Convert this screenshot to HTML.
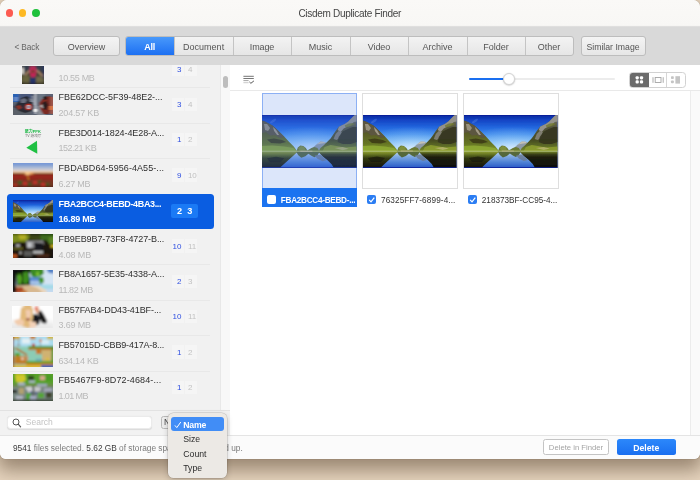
<!DOCTYPE html>
<html><head><meta charset="utf-8"><title>Cisdem Duplicate Finder</title>
<style>
*{box-sizing:border-box;margin:0;padding:0}
html,body{width:700px;height:480px;overflow:hidden}
body{font-family:"Liberation Sans","Noto Sans CJK SC",sans-serif;background:#d9c8b3;position:relative;color:#333}
.abs{position:absolute}
#desk{position:absolute;left:0;top:0;width:700px;height:480px;background:#e6d4be}
#win{position:absolute;left:0;top:0;width:700px;height:458.6px;border-radius:7px 7px 6px 6px;overflow:hidden;background:#fff;box-shadow:0 0 1px rgba(60,40,20,.5),0 9px 18px 2px rgba(80,60,40,.5)}
#title{position:absolute;left:0;top:0;width:700px;height:27px;z-index:2;background:linear-gradient(#faf9f7 0,#f8f7f5 25.4px,#e6e5e4 26.2px,#d9d9d9 26.8px)}
#title .t{position:absolute;left:298.4px;top:7.5px;font-size:10px;line-height:12px;letter-spacing:-.3px;color:#444;white-space:nowrap}
.tl{position:absolute;top:9.2px;width:7.8px;height:7.8px;border-radius:50%}
#tool{position:absolute;left:0;top:26px;width:700px;height:39.5px;background:#d9d9d9}
.btn{position:absolute;top:10.4px;height:19.6px;border:1px solid #bdbdbd;border-radius:3px;background:linear-gradient(#f4f4f4,#e6e6e6);font-size:9px;color:#555;text-align:center;line-height:20.6px}
#tabs{position:absolute;left:125.2px;top:10.1px;height:19.9px;width:448.6px;border:1px solid #bdbdbd;border-radius:3px;background:linear-gradient(#f3f3f3,#e6e6e6);overflow:hidden}
#tabs div{position:absolute;top:0;height:17.9px;line-height:21.2px;padding-right:1.4px;font-size:9px;color:#555;text-align:center;border-left:1px solid #c4c4c4}
#left{position:absolute;left:0;top:65px;width:220px;height:345.4px;background:#f1f1f1;overflow:hidden}
#lsb{position:absolute;left:220px;top:65px;width:10px;height:345.4px;background:#f8f8f8;border-left:1px solid #e8e8e8}
#right{position:absolute;left:229.8px;top:65px;width:470.2px;height:370px;background:#fff;overflow:hidden}
.row{position:absolute;left:0;width:220.5px;height:35.4px}
.row .sep{position:absolute;left:10px;width:200px;top:0;height:1px;background:#e8e8e8}
.row .nm{position:absolute;left:58.5px;top:3.8px;font-size:9px;color:#2e2e2e;white-space:nowrap;line-height:12px}
.row .sz{position:absolute;left:58.5px;top:19.6px;font-size:9px;color:#b9b9b9;white-space:nowrap;line-height:12px}
.row .c1b,.row .c2b{position:absolute;top:10.2px;height:13.5px;width:12.3px;background:#f5f5f5}
.row .c1b{left:172.1px}.row .c2b{left:185px}
.row .cb{position:absolute;left:171.3px;top:10.3px;width:27px;height:14px;border-radius:2px;background:#1b7af5}
.row .c1,.row .c2{position:absolute;top:10.6px;height:13px;width:20px;font-size:8px;line-height:13px;text-align:center}
.row .c1{left:161.4px;text-align:right;color:#2f4fe0}
.row .c2{left:187.9px;text-align:left;color:#c2c2c2}
.row.sel .selbg{position:absolute;left:7px;top:6.3px;width:206.6px;height:35px;top:0.9px;border-radius:3.5px;background:#0a5de1}
.row.sel .nm,.row.sel .sz,.row.sel .c1,.row.sel .c2{color:#fff;font-weight:bold}
.row.sel .nm{letter-spacing:-.35px;top:4.1px}
.row.sel .sz{letter-spacing:-.2px;top:19.9px}
.row.sel .c1,.row.sel .c2{font-size:9.2px;top:11.2px}
.row.sel .c1{left:162px}.row.sel .c2{left:187.2px}
.th{position:absolute;overflow:hidden}
#srow{position:absolute;left:0;top:410.4px;width:230px;height:25px;background:#f2f2f2;border-top:1px solid #e2e2e2}
#search{position:absolute;left:7.4px;top:4.4px;width:144.6px;height:13.4px;border-radius:3.5px;background:#fff;border:.5px solid #ebebeb;box-shadow:0 .5px 1px rgba(0,0,0,.1)}
#bot{position:absolute;left:0;top:435px;width:700px;height:25px;background:#fbfbfb;border-top:1px solid #e4e4e4}
#menu{position:absolute;left:168px;top:413px;width:59px;height:65px;border-radius:5.5px;background:#ece9e5;box-shadow:0 0 0 .5px rgba(60,50,40,.22),0 2px 6px rgba(0,0,0,.18)}
#menu .it{position:absolute;left:15.3px;font-size:8.7px;color:#2b2b2b;line-height:12px}
.card{position:absolute;top:28.4px;width:95.8px;height:95.2px;border:1px solid #dedede;background:#fff}
.lbl{position:absolute;font-size:8.2px;color:#333;white-space:nowrap;line-height:12px;top:129.5px}
.ck{position:absolute;top:129.8px;width:9px;height:9.5px;border-radius:2px;background:#2b7df3}
</style></head><body>
<svg width="0" height="0" style="position:absolute">
 <defs>
  <linearGradient id="sky" x1="0" y1="0" x2="0" y2="1">
   <stop offset="0" stop-color="#0c2ca4"/><stop offset=".12" stop-color="#1444c4"/><stop offset=".32" stop-color="#2266de"/><stop offset=".52" stop-color="#3a88ec"/><stop offset=".72" stop-color="#74b6f4"/><stop offset=".88" stop-color="#a8d4fa"/><stop offset="1" stop-color="#bcdffc"/>
  </linearGradient>
  <radialGradient id="skyr" cx=".52" cy=".9" r=".6"><stop offset="0" stop-color="#d8ecff" stop-opacity=".85"/><stop offset=".5" stop-color="#a8d4fa" stop-opacity=".4"/><stop offset="1" stop-color="#a8d4fa" stop-opacity="0"/></radialGradient>
  <linearGradient id="wat" x1="0" y1="0" x2="0" y2="1">
   <stop offset="0" stop-color="#c8dcf0"/><stop offset=".3" stop-color="#86aee4"/><stop offset=".7" stop-color="#4c80d4"/><stop offset="1" stop-color="#2c5cc8"/>
  </linearGradient>
  <linearGradient id="ml" x1="0" y1="0" x2="0" y2="1">
   <stop offset="0" stop-color="#4e4a34"/><stop offset=".45" stop-color="#5a5e26"/><stop offset=".75" stop-color="#667624"/><stop offset="1" stop-color="#86a030"/>
  </linearGradient>
  <linearGradient id="mr" x1="0" y1="0" x2="0" y2="1">
   <stop offset="0" stop-color="#7c7c70"/><stop offset=".35" stop-color="#54543c"/><stop offset=".7" stop-color="#484e22"/><stop offset="1" stop-color="#748a2a"/>
  </linearGradient>
  <linearGradient id="rl" x1="0" y1="0" x2="0" y2="1">
   <stop offset="0" stop-color="#8a9a30"/><stop offset=".2" stop-color="#5e6c20"/><stop offset=".4" stop-color="#343a12"/><stop offset="1" stop-color="#14140a"/>
  </linearGradient>
  <linearGradient id="rr" x1="0" y1="0" x2="0" y2="1">
   <stop offset="0" stop-color="#6e7e28"/><stop offset=".15" stop-color="#3c4218"/><stop offset=".35" stop-color="#1c1e0e"/><stop offset="1" stop-color="#0e0e08"/>
  </linearGradient>
  <filter id="bs" x="0" y="0" width="100%" height="100%"><feGaussianBlur stdDeviation=".8"/><feComponentTransfer><feFuncA type="linear" slope="3"/></feComponentTransfer></filter>
  <linearGradient id="g_sun" x1="0" y1="0" x2="0" y2="1"><stop offset="0" stop-color="#6c92d8"/><stop offset=".12" stop-color="#90a8d4"/><stop offset=".24" stop-color="#c0c8d8"/><stop offset=".34" stop-color="#e6d0c0"/><stop offset=".41" stop-color="#f0a85c"/><stop offset=".44" stop-color="#a84020"/><stop offset=".48" stop-color="#9c261c"/><stop offset=".7" stop-color="#8c261c"/><stop offset="1" stop-color="#70281c"/></linearGradient>
  <linearGradient id="g_fl" x1="0" y1="0" x2="0" y2="1"><stop offset="0" stop-color="#fafafa"/><stop offset="1" stop-color="#e4e4e4"/></linearGradient>
  <filter id="bl" x="-5%" y="-5%" width="110%" height="110%"><feGaussianBlur stdDeviation=".45"/></filter>
  <symbol id="lake" viewBox="0 0 94 53" preserveAspectRatio="none">
   <rect width="94" height="53" fill="#0a1c98"/>
   <g filter="url(#bl)">
   <rect x="0" y=".8" width="94" height="36" fill="url(#sky)"/>
   <rect x="0" y=".8" width="94" height="36" fill="url(#skyr)"/>
   <rect x="0" y="36" width="94" height="16.4" fill="url(#wat)"/>
   <ellipse cx="11" cy="6" rx="3.5" ry="1.3" fill="#6a98e8" opacity=".3" transform="rotate(-35 11 6)"/>
   <!-- distant mountain -->
   <polygon points="50,33 54,29.5 58,26.5 62,26.8 65,28.5 70,36 50,36" fill="#8e9aa4"/>
   <polygon points="54,29.5 58,26.5 62,26.8 63,28 58,28.6" fill="#c4c0b4"/>
   <!-- left mountain -->
   <polygon points="0,5.5 3,6.5 10.5,10.5 16,15.5 22,21.5 27,27 31.5,31.5 33.5,34 35,36.5 0,36.5" fill="url(#ml)"/>
   <polygon points="0,6 3,6.8 10,10.5 15,15 19,19 22,22 18,23 13,20 8,20.5 4,17 0,18" fill="#5c5640"/>
   <polygon points="2,9 5,9 8,13 6,16 3,15" fill="#a8a08c" opacity=".8"/>
   <polygon points="11,12 14,15 17,20 15,20 12,16" fill="#b4ac98" opacity=".8"/>
   <polygon points="5,24.5 12,23.5 20,25 24,27 18,28.5 9,28" fill="#3a3818" opacity=".85"/>
   <polygon points="0,31 10,30.5 22,31.5 31,33 34,36 0,36" fill="#8ea834" opacity=".9"/>
   <!-- right mountain -->
   <polygon points="94,0 91.5,.6 88,4 85.6,6.4 82,9 79.8,10 76.3,11.7 74.5,14 72.8,16.3 70,20.5 68,23.3 64,27.4 61,30.5 58,33 56,36.5 94,36.5" fill="url(#mr)"/>
   <polygon points="94,0 91.5,.6 88,4 85.6,6.4 82,9 79.8,10 76.3,11.7 75,15 78,17 81,13.5 85,11.5 88,10.5 91,7 94,6.5" fill="#94928a"/>
   <polygon points="73,19 76,16 79,17 78,22 74,25 71,24" fill="#8c8a82" opacity=".8"/>
   <polygon points="76,22 80,16.5 85,14 90,12 94,12 94,27 88,29 80,29 75,27" fill="#35361f" opacity=".92"/>
   <polygon points="82,10.5 86,8.5 90,8 92,9.5 87,11.5 83,12.5" fill="#70782c" opacity=".8"/>
   <polygon points="62,32 68,30 74,31 82,32.5 94,31.5 94,36 60,36" fill="#8c9c30" opacity=".9"/>
   <polygon points="72,33 80,32 86,33.5 80,35" fill="#c0b87c" opacity=".7"/>
   <!-- mid trees -->
   <polygon points="34,36.5 35.5,32.5 38,30.5 41,31 43.5,33 45,35.3 47,34.2 49,33 52,32 55,33 57,36.5" fill="#6a7a34"/>
   <polygon points="36,33 39,31 42,32 43,35 37,35.5" fill="#8a9a40" opacity=".7"/>
   <!-- shore line -->
   <rect x="0" y="35.5" width="94" height="1.2" fill="#b8c268" opacity=".8"/>
   <rect x="38" y="35.6" width="12" height="1" fill="#d8c8a8" opacity=".8"/>
   <!-- reflections -->
   <polygon points="0,36.8 35,36.8 31,40.5 26,45 21,49.5 18,52.4 0,52.4" fill="url(#rl)"/>
   <polygon points="5,43 14,41.5 22,43 18,47 8,47" fill="#1a1a0c" opacity=".7"/>
   <polygon points="56,36.8 94,36.8 94,52.4 71,52.4 69,49 65,45 60,41" fill="url(#rr)"/>
   <polygon points="34,36.8 57,36.8 55,40 52,42 49,40.5 46,38.5 43,41 39,42.5 36,40" fill="#4e5e28" opacity=".9"/>
   <polygon points="52,40 58,39.5 64,45 60,46 55,43.5" fill="#6a7688" opacity=".75"/>
   </g>
   <rect x="0" y="52.3" width="94" height=".7" fill="#0a1c98"/>
  </symbol>
 </defs>
</svg>
<div id="all" style="position:absolute;left:0;top:0;width:700px;height:480px;overflow:hidden;will-change:transform">
<div id="desk"></div>
<div id="win">
 <div id="title">
  <div class="tl" style="left:5.5px;background:#fc5b51"></div>
  <div class="tl" style="left:18.7px;background:#fdb924"></div>
  <div class="tl" style="left:31.8px;background:#1fc13c"></div>
  <div class="t">Cisdem Duplicate Finder</div>
 </div>
 <div id="tool">
  <div class="abs" style="left:14.4px;top:15.7px;font-size:8.3px;line-height:10px;color:#666;letter-spacing:-.1px">&lt; Back</div>
  <div class="btn" style="left:53.4px;width:66.2px">Overview</div>
  <div id="tabs">
   <div style="left:-1px;width:50.2px;top:-1px;height:19.9px;line-height:23.2px;border-left:0;background:linear-gradient(#4b9bfb,#1a6df2);color:#fff;font-weight:bold;letter-spacing:-.2px">All</div>
   <div style="left:48.2px;width:58.9px">Document</div>
   <div style="left:107.1px;width:57.9px;letter-spacing:-.1px">Image</div>
   <div style="left:165.2px;width:58.6px">Music</div>
   <div style="left:223.8px;width:58.4px;letter-spacing:-.1px">Video</div>
   <div style="left:282.2px;width:58.9px">Archive</div>
   <div style="left:341.1px;width:57.7px">Folder</div>
   <div style="left:398.8px;width:48.5px">Other</div>
  </div>
  <div class="btn" style="left:580.5px;width:65px;font-size:8.7px">Similar Image</div>
 </div>
 <div id="left">
<div class="row" style="top:-13.0px"><div class="sz" style="letter-spacing:-0.314px">10.55 MB</div><div class="c1b"></div><div class="c2b"></div><div class="c1">3</div><div class="c2">4</div></div>
<svg class="th" style="left:21.9px;top:1.0px" width="22.1" height="18.0" viewBox="0 0 22 18" preserveAspectRatio="none"><g filter="url(#bs)"><rect width="22" height="18" fill="#403e34"/><rect width="22" height="5" fill="#343c4c"/>
  <rect x="0.5" y="9.5" width="7" height="7" fill="#68643e"/><rect x="14" y="10.5" width="7" height="6" fill="#706a48"/>
  <rect x="0" y="2" width="2" height="6" fill="#d8d4cc"/><rect x="20.5" y="0" width="1.5" height="12" fill="#2a3460"/>
  <path d="M7.5 4.5L3 9M14.5 4L20.5 10" stroke="#c49a78" stroke-width="1.3"/>
  <polygon points="8,1 13.5,1 14.5,5 13.2,11 8.8,11 7.5,5" fill="#c8225a"/>
  <polygon points="9,4 12.5,3.5 12.5,7 9.5,7.5" fill="#7a3a30"/>
  <rect x="8" y="11.5" width="5.5" height="6" fill="#28366a"/><rect y="17" width="22" height="1" fill="#1a1410"/></g></svg>
<div class="row" style="top:22.4px"><div class="sep"></div><div class="nm" style="letter-spacing:-0.052px">FBE62DCC-5F39-48E2-...</div><div class="sz" style="letter-spacing:-0.175px">204.57 KB</div><div class="c1b"></div><div class="c2b"></div><div class="c1">3</div><div class="c2">4</div></div>
<svg class="th" style="left:12.8px;top:28.8px" width="40.2" height="20.9" viewBox="0 0 40 21" preserveAspectRatio="none"><g filter="url(#bs)"><rect width="40" height="21" fill="#5c6474"/>
  <rect width="6" height="8" fill="#2c62b4"/><rect x="1" y="3" width="4" height="4" fill="#6a8cc8"/><rect x="7" width="12" height="5" fill="#48587c"/>
  <rect x="24" y="0" width="8" height="12" fill="#6c7684"/><rect x="24" y="12" width="8" height="9" fill="#8a8e96"/>
  <rect x="0" y="15" width="18" height="6" fill="#5a6068"/>
  <polygon points="4,9 8,4 14,2 18,5 20,10 19,17 12,19 6,17 1,13" fill="#22222a" opacity=".85"/><polygon points="7,6 11,4 14,6 12,9 8,9" fill="#6a7080"/><polygon points="3,12 7,11 9,14 5,16" fill="#8a3028"/><polygon points="16,4 19,5 20,8 17,8" fill="#7c8494"/>
  <circle cx="15.5" cy="13" r="3.4" fill="#b02c24"/><circle cx="15.5" cy="13" r="2" fill="#e0dcdc"/><circle cx="15.5" cy="13" r="1" fill="#3a4a8a"/>
  <path d="M22.3 0V20" stroke="#d4d8e0" stroke-width="1.2"/><circle cx="22.3" cy="16.5" r="1.8" fill="#fafafa"/>
  <path d="M19.5 2L21 11" stroke="#c8ccd4" stroke-width=".7"/>
  <polygon points="26,9 29,5 33,3 37,2 39,5 38,12 36,20 30,20 27,15" fill="#7c2a22"/><polygon points="27,12 30,9 32,12 30,15" fill="#c8c0c0"/>
  <polygon points="29,9 33,7 35,11 33,16 30,15" fill="#2a1c1c"/><polygon points="30,3 33,2 34,5 31,6" fill="#1a1414"/>
  <rect x="37" y="3" width="3" height="17" fill="#a0584c"/><rect x="36" y="12" width="4" height="4" fill="#d87848"/></g></svg>
<div class="row" style="top:57.8px"><div class="sep"></div><div class="nm" style="letter-spacing:-0.082px">FBE3D014-1824-4E28-A...</div><div class="sz" style="letter-spacing:-0.488px">152.21 KB</div><div class="c1b"></div><div class="c2b"></div><div class="c1">1</div><div class="c2">2</div></div>
<div class="abs" style="left:24.7px;top:65.1px;font-size:4px;line-height:4px;color:#1fb848;font-weight:bold;white-space:nowrap">聚力PPK</div>
<div class="abs" style="left:25px;top:69.8px;font-size:3.6px;line-height:3.6px;color:#707070;white-space:nowrap">TV 游戏厅</div>
<svg class="abs" style="left:25px;top:74.5px" width="14" height="15" viewBox="0 0 14 15"><polygon points="1.3,7.8 12,0.8 12.3,13.8" fill="#1fc043"/></svg>
<div class="row" style="top:93.2px"><div class="sep"></div><div class="nm" style="letter-spacing:0.067px">FBDABD64-5956-4A55-...</div><div class="sz" style="letter-spacing:-0.233px">6.27 MB</div><div class="c1b"></div><div class="c2b"></div><div class="c1">9</div><div class="c2">10</div></div>
<svg class="th" style="left:12.8px;top:97.7px" width="40.2" height="24.6" viewBox="0 0 40 24.6" preserveAspectRatio="none"><g filter="url(#bs)"><rect width="40" height="24.6" fill="url(#g_sun)"/>
  <ellipse cx="14.5" cy="10.6" rx="3" ry="1.1" fill="#fff6d0"/><ellipse cx="14.5" cy="10.3" rx="8" ry="1.4" fill="#f8b860" opacity=".6"/>
  <rect y="10.4" width="12" height=".8" fill="#201008"/><rect x="20" y="10.4" width="20" height=".8" fill="#201008"/>
  <path d="M14.5 12L15.5 17" stroke="#d8a020" stroke-width=".9"/>
  <rect y="17" width="40" height="6.8" fill="#6a4428" opacity=".55"/>
  <g fill="#3c5a24"><rect x="5" y="18" width="4" height="3"/><rect x="15" y="20" width="3" height="2.5"/><rect x="25" y="17.5" width="3" height="2"/><rect x="33" y="20" width="3" height="2.5"/></g>
  <g fill="#c03028"><rect x="10" y="19" width="4" height="3"/><rect x="20" y="18" width="4" height="3"/><rect x="28" y="20" width="4" height="3"/><rect x="1" y="21" width="3" height="2"/></g>
  <rect y="23.8" width="40" height=".8" fill="#100806"/></g></svg>
<div class="row sel" style="top:128.6px"><div class="selbg"></div><div class="nm">FBA2BCC4-BEBD-4BA3...</div><div class="sz">16.89 MB</div><div class="cb"></div><div class="c1">2</div><div class="c2">3</div></div>
<svg class="th" style="left:12.9px;top:134.9px" width="40" height="22.4"><use href="#lake" width="40" height="22.4"/></svg>
<div class="row" style="top:164.0px"><div class="nm" style="letter-spacing:-0.082px">FB9EB9B7-73F8-4727-B...</div><div class="sz" style="letter-spacing:-0.133px">4.08 MB</div><div class="c1b"></div><div class="c2b"></div><div class="c1">10</div><div class="c2">11</div></div>
<svg class="th" style="left:12.8px;top:168.7px" width="40.0" height="24.0" viewBox="0 0 40 24" preserveAspectRatio="none"><g filter="url(#bs)"><rect width="40" height="24" fill="#1c160e"/>
  <polygon points="0,0 17,0 16,5 13,8 6,8 0,9" fill="#7c8c1c"/><polygon points="5,1 13,1 13,5 7,5.5" fill="#b4b022"/>
  <rect x="17" y="1" width="12" height="5" fill="#3a4416"/>
  <polygon points="27,1 40,1 40,10 36,9 33,6 28,6" fill="#3e6a1c"/><rect x="36" y="3" width="4" height="7" fill="#5a8424"/>
  <rect x="37.5" y="11" width="2.5" height="2.5" fill="#d8c020"/>
  <polygon points="13,7 30,6.5 31,10 28,13 20,14 14,14" fill="#8c8c8e"/><rect x="14.5" y="8.5" width="4" height="5" fill="#c4c6ca"/>
  <polygon points="21,8.5 30,9 30,17 22,17" fill="#16161a"/>
  <rect x="20" y="16.8" width="10" height="2.8" fill="#b8babc"/><rect x="11" y="17" width="8" height="5" fill="#5a5a58"/>
  <rect x="3" y="10.5" width="4" height="2" fill="#c8c8c8"/><rect x="6.5" y="17.5" width="2" height="2.5" fill="#c0c0c0"/>
  <rect x="1" y="13.5" width="9" height="2" fill="#6a6a20"/>
  <rect x="0" y="20.5" width="4" height="2.8" fill="#c8581a"/><rect x="24" y="20.5" width="12" height="2" fill="#5a3018"/>
  <rect y="23.2" width="40" height=".8" fill="#0c0a08"/><rect width="40" height=".8" fill="#0c0a08"/></g></svg>
<div class="row" style="top:199.4px"><div class="sep"></div><div class="nm" style="letter-spacing:0.000px">FB8A1657-5E35-4338-A...</div><div class="sz" style="letter-spacing:-0.429px">11.82 MB</div><div class="c1b"></div><div class="c2b"></div><div class="c1">2</div><div class="c2">3</div></div>
<svg class="th" style="left:12.8px;top:205.1px" width="40.2" height="22.2" viewBox="0 0 40 22.2" preserveAspectRatio="none"><g filter="url(#bs)"><rect width="40" height="22.2" fill="#c4daf0"/>
  <rect x="28" y="0" width="12" height="16" fill="#d4e4f4"/><polygon points="33,0 40,0 40,3.5 36,3" fill="#4a7cc4"/>
  <rect x="14" y="7" width="15" height="8" fill="#5c8cd4"/><rect x="17" y="11" width="10" height="3" fill="#a8c4e8"/>
  <rect x="22" y="14.5" width="18" height="4.5" fill="#a4dae8"/>
  <polygon points="0,15.5 16,15 26,17.5 32,22.2 0,22.2" fill="#d8b88e"/><polygon points="16,15 26,16 33,20 34,22.2 30,22.2 24,18" fill="#ecd8c0"/>
  <polygon points="1,17.5 9,17 13,22.2 1,22.2" fill="#a84024"/><rect x="8" y="20.5" width="6" height="1.7" fill="#c87830"/>
  <rect width="19" height="3" fill="#0c100a"/><rect width="3.2" height="22.2" fill="#0a0c08"/>
  <polygon points="3,3 16,2 17,15 4,15.5" fill="#1c3410"/>
  <polygon points="4,6 7,3.5 9,8 8,14 5,14" fill="#52a422"/><polygon points="10,2.5 15,1.5 16,9 14,14 10,13" fill="#3c8c1c"/>
  <polygon points="17,0 30,0 31,3 28,6 22,7.5 18,6" fill="#3a8a22"/><rect x="23" y="2" width="3" height="4" fill="#78c030"/>
  <polygon points="25,8 30,7 31,12 27,14" fill="#3e9424"/></g></svg>
<div class="row" style="top:234.8px"><div class="sep"></div><div class="nm" style="letter-spacing:-0.086px">FB57FAB4-DD43-41BF-...</div><div class="sz" style="letter-spacing:-0.167px">3.69 MB</div><div class="c1b"></div><div class="c2b"></div><div class="c1">10</div><div class="c2">11</div></div>
<svg class="th" style="left:12.4px;top:240.5px" width="40.6" height="22.5" viewBox="0 0 40.5 22.5" preserveAspectRatio="none"><g filter="url(#bs)"><rect width="40.5" height="22.5" fill="#fefefe"/><rect y="13" width="40.5" height="9.5" fill="url(#g_fl)"/>
  <polygon points="26,6 29,4.5 32,9 35,15 34,17.5 30,17 27,12" fill="#141416"/>
  <polygon points="19,9 25,8 28,12 27,18 21,20 18,15" fill="#16161a"/>
  <polygon points="22,1.5 26,0.5 27.5,4 26,7.5 23.5,7" fill="#e4a484"/><rect x="23" y="1" width="2" height="2.2" fill="#e83a30"/>
  <polygon points="9,2 13,0 19,0 21,3 21,12 19,20 16,22 10,20 8,12" fill="#e2ba7c"/>
  <polygon points="13.5,4 18.5,4 19,9 17,12.5 14.5,12" fill="#f2ccb0"/><rect x="14" y="12.5" width="3.5" height="1.8" fill="#8a3a40"/>
  <polygon points="2,14.5 8,12.5 12,15 12,19 6,19.5 3,17" fill="#f2ccac"/><polygon points="17,15 24,16 24,21 18,22" fill="#f4d2b8"/></g></svg>
<div class="row" style="top:270.2px"><div class="sep"></div><div class="nm" style="letter-spacing:-0.150px">FB57015D-CBB9-417A-8...</div><div class="sz" style="letter-spacing:-0.225px">634.14 KB</div><div class="c1b"></div><div class="c2b"></div><div class="c1">1</div><div class="c2">2</div></div>
<svg class="th" style="left:12.6px;top:272.2px" width="40.5" height="30.1" viewBox="0 0 40.5 30" preserveAspectRatio="none"><g filter="url(#bs)"><rect width="40.5" height="30" fill="#8cccb4"/>
  <rect width="40.5" height="9.5" fill="#acdcf0"/><rect x="9" y="1.5" width="8" height="5" fill="#e4f0f4"/><rect x="28" y="3" width="8" height="4" fill="#d8ecf4"/>
  <rect width="7" height="2.2" fill="#d0a414"/><rect x="17" width="5.5" height="2.2" fill="#c87c20"/><rect x="34" width="6.5" height="2.2" fill="#d4b41c"/>
  <rect x="15.5" y="9" width="25" height="2.2" fill="#4c9c22"/><rect x="15.5" y="11.2" width="25" height="1.8" fill="#b86c20"/>
  <rect x="29" y="13" width="9.5" height="13" fill="#d0b272"/><rect x="38.5" y="9" width="2" height="19" fill="#5c8c24"/>
  <rect x="23" y="13" width="5.5" height="4" fill="#c87828"/><circle cx="20.5" cy="8" r="1.6" fill="#c02420"/><circle cx="27.5" cy="3.5" r="1.3" fill="#d87040"/><path d="M27.5 5V10" stroke="#8a8a8a" stroke-width=".8"/>
  <path d="M5.5 2V9" stroke="#8a8a8a" stroke-width=".8"/><rect x="3.5" y="7.5" width="4" height="1.6" fill="#9aa0a4"/>
  <path d="M2.5 11L14 18" stroke="#b46c24" stroke-width="1.6"/>
  <rect x="1.5" y="19" width="11.5" height="8" fill="#c07c24"/><rect x="2" y="16" width="5" height="3" fill="#58a028"/>
  <circle cx="9.5" cy="21.5" r="1.6" fill="#e8c8b0"/><rect x="13.5" y="19" width="1.5" height="5" fill="#d87850"/>
  <rect x="13" y="24" width="27.5" height="2" fill="#4ca020"/><rect x="13" y="26" width="27.5" height="2" fill="#c47c20"/>
  <g fill="#3c68c0"><rect x="23" y="22" width="1.2" height="1.4"/><rect x="25.3" y="22" width="1.2" height="1.4"/><rect x="27.6" y="22" width="1.2" height="1.4"/></g>
  <rect x="33" y="21" width="3" height="2" fill="#e0c020"/>
  <rect y="28" width="28" height="2" fill="#e0b82c"/><rect x="28" y="28" width="12.5" height="2" fill="#2c5cb4"/>
  <rect width="1" height="30" fill="#8a2c20"/></g></svg>
<div class="row" style="top:305.6px"><div class="sep"></div><div class="nm" style="letter-spacing:0.124px">FB5467F9-8D72-4684-...</div><div class="sz" style="letter-spacing:-0.600px">1.01 MB</div><div class="c1b"></div><div class="c2b"></div><div class="c1">1</div><div class="c2">2</div></div>
<svg class="th" style="left:12.7px;top:309.4px" width="40.4" height="26.7" viewBox="0 0 40.4 26.7" preserveAspectRatio="none"><g filter="url(#bs)"><rect width="40.4" height="26.7" fill="#6c8c48"/>
  <rect width="40.4" height="10" fill="#58a02a"/><polygon points="2,0.5 12,0.5 13,6 9,9 3,8" fill="#d0c82c"/>
  <rect x="15" y="2" width="6" height="4" fill="#2c3c1c"/><rect x="27" y="2" width="5" height="4" fill="#d8a88c"/><rect x="33" y="1" width="6" height="6" fill="#4c9c28"/>
  <rect x="16" y="6.5" width="6" height="2.2" fill="#b0b8d4"/><rect x="5" y="9" width="7" height="2.5" fill="#a8b0cc"/><rect x="24" y="10" width="10" height="2.5" fill="#a4aac4"/>
  <rect y="13" width="40.4" height="13" fill="#7c8490" opacity=".8"/>
  <polygon points="12,13 19,12.5 20,17 16,19" fill="#d0d0d4"/><polygon points="21,12.5 28,13.5 27,17 22,18" fill="#c8c8cc"/>
  <path d="M20.3 12V22" stroke="#30302c" stroke-width=".9"/><rect x="17" y="17.5" width="2" height="2" fill="#2a3a8a"/><rect x="22" y="18" width="2" height="2" fill="#2a3a8a"/>
  <rect x="6" y="14" width="5" height="6" fill="#b0a070"/><rect x="13" y="19" width="5" height="6" fill="#4ca030"/><rect x="25" y="19" width="6" height="5" fill="#54a434"/>
  <rect x="31" y="14" width="8" height="4" fill="#a0a4b4"/><rect x="33" y="18" width="6" height="6" fill="#3c442c"/><rect x="0" y="16" width="4" height="3" fill="#1c1c18"/>
  <rect x="17" y="22" width="6" height="3.5" fill="#a4acc4"/><rect x="3" y="22" width="7" height="3" fill="#b4b8c4"/>
  <rect y="25.6" width="40.4" height="1.1" fill="#14180c"/></g></svg>
 </div>
 <div id="lsb"><div class="abs" style="left:2px;top:11px;width:5px;height:12px;border-radius:2.5px;background:#bdbdbd"></div></div>
 <div id="srow">
  <div id="search">
   <svg class="abs" style="left:3.4px;top:1px" width="10" height="10" viewBox="0 0 10 10"><circle cx="4" cy="4" r="3" fill="none" stroke="#555" stroke-width="1"/><path d="M6.2 6.2 L8.6 8.8" stroke="#555" stroke-width="1.2" stroke-linecap="round"/></svg>
   <div class="abs" style="left:17.4px;top:-.7px;font-size:8.5px;line-height:12px;color:#c4c4c4">Search</div>
  </div>
  <div class="abs" style="left:161px;top:4.6px;width:30px;height:13px;border:1px solid #b8b8b8;border-radius:2.5px;background:#ededed;font-size:8.5px;line-height:10.5px;padding-left:2px;color:#444">Name</div>
 </div>
 <div id="right">
  <!-- select icon -->
  <svg class="abs" style="left:13px;top:10px" width="12" height="10" viewBox="0 0 12 10">
   <path d="M.4 1.3H10.8M.4 3.5H10.8" stroke="#666" stroke-width=".9"/>
   <path d="M.4 5.6H5.6" stroke="#9a9a9a" stroke-width=".9"/><path d="M.4 7.7H5.6" stroke="#c4c4c4" stroke-width=".9"/>
   <path d="M6.4 6.9L7.9 8.3L10.9 5.9" stroke="#555" stroke-width="1" fill="none"/>
  </svg>
  <!-- slider -->
  <div class="abs" style="left:239.2px;top:13.2px;width:146px;height:1.6px;border-radius:1px;background:#ececec"></div>
  <div class="abs" style="left:239.2px;top:13px;width:36px;height:2px;border-radius:1px;background:#1a6ff0"></div>
  <div class="abs" style="left:273px;top:8px;width:12px;height:12px;border-radius:50%;background:#fff;border:.5px solid #d4d4d4;box-shadow:0 .5px 1.5px rgba(0,0,0,.25)"></div>
  <!-- view mode -->
  <div class="abs" style="left:399.7px;top:7.1px;width:56.1px;height:15.9px;border:1px solid #d2d2d2;border-radius:3.5px;background:#fff;overflow:hidden">
   <div class="abs" style="left:-1px;top:-1px;width:19.2px;height:15.9px;background:#6b6b6b"></div>
   <div class="abs" style="left:36px;top:0;width:1px;height:14px;background:#d6d6d6"></div>
   <svg class="abs" style="left:-.5px;top:-.8px" width="56" height="16" viewBox="0 0 56 16">
    <g fill="#fff"><rect x="5.6" y="4.2" width="3.2" height="3.2" rx="1.1"/><rect x="9.9" y="4.2" width="3.2" height="3.2" rx="1.1"/><rect x="5.6" y="8.3" width="3.2" height="3.2" rx="1.1"/><rect x="9.9" y="8.3" width="3.2" height="3.2" rx="1.1"/></g>
    <g fill="none" stroke="#a4a4a4" stroke-width=".9"><path d="M23 5.2V10.8M33.2 5.2V10.8"/><rect x="25.2" y="5.5" width="5.8" height="5"/></g>
    <g fill="#c4c4c4"><rect x="41" y="4.3" width="2.8" height="2.8" rx=".8"/><rect x="41" y="8.4" width="2.8" height="2.8" rx=".8"/><rect x="45.4" y="4.2" width="4.6" height="7.4"/></g>
   </svg>
  </div>
  <div class="abs" style="left:0;top:25.2px;width:471px;height:1px;background:#e9e9e9"></div>
  <!-- right scrollbar track -->
  <div class="abs" style="left:460.6px;top:26px;width:10px;height:344px;background:#fafafa;border-left:1px solid #ececec"></div>
  <!-- cards -->
  <div class="card" style="left:31.8px;background:#dce6fa;border-color:#8cb0f4"></div>
  <div class="abs" style="left:31.8px;top:123.4px;width:95.8px;height:19px;background:#1b73f0"></div>
  <div class="card" style="left:132.6px"></div>
  <div class="card" style="left:233.4px"></div>
  <svg class="abs" style="left:32.3px;top:49.6px" width="94.8" height="53.2"><use href="#lake" width="94.8" height="53.2"/></svg>
  <svg class="abs" style="left:133.5px;top:49.6px" width="93.7" height="53.1"><use href="#lake" width="93.7" height="53.1"/></svg>
  <svg class="abs" style="left:234.3px;top:49.6px" width="93.7" height="53.1"><use href="#lake" width="93.7" height="53.1"/></svg>
  <div class="abs" style="left:32.3px;top:49.6px;width:94.8px;height:53.2px;background:rgba(70,120,235,.24)"></div>
  <div class="ck" style="left:37.5px;background:#fff"></div>
  <div class="lbl" style="left:51px;color:#fff;font-weight:bold;letter-spacing:-.28px">FBA2BCC4-BEBD-...</div>
  <div class="ck" style="left:137.6px"><svg class="abs" style="left:0;top:0" width="9" height="9" viewBox="0 0 9 9"><path d="M2.2 4.9L4 6.8L7.3 2.6" stroke="#fff" stroke-width="1.2" fill="none"/></svg></div>
  <div class="lbl" style="left:151.2px;letter-spacing:.12px">76325FF7-6899-4...</div>
  <div class="ck" style="left:238.4px"><svg class="abs" style="left:0;top:0" width="9" height="9" viewBox="0 0 9 9"><path d="M2.2 4.9L4 6.8L7.3 2.6" stroke="#fff" stroke-width="1.2" fill="none"/></svg></div>
  <div class="lbl" style="left:252px">218373BF-CC95-4...</div>
 </div>
 <div id="bot">
  <div class="abs" style="left:13px;top:6.9px;font-size:8.3px;line-height:11px;color:#7a7a7a;white-space:nowrap"><span style="color:#3a3a3a">9541</span> files selected. <span style="color:#3a3a3a">5.62 GB</span> of storage space can be freed up.</div>
  <div class="abs" style="left:543.2px;top:2.7px;width:65.6px;height:16.6px;border:1px solid #c4c4c4;border-radius:2.5px;background:#fff;font-size:7.7px;line-height:15.6px;text-align:center;color:#a4a4a4">Delete in Finder</div>
  <div class="abs" style="left:617px;top:2.7px;width:58.6px;height:16.4px;border-radius:2.5px;background:linear-gradient(#2c88fb,#1a6ff0);font-size:8.7px;line-height:18px;text-align:center;color:#fff;font-weight:bold">Delete</div>
 </div>
</div>
<div id="menu">
 <div class="abs" style="left:3px;top:4px;width:52.5px;height:14px;border-radius:3px;background:#418df6"></div>
 <svg class="abs" style="left:5.5px;top:7.8px" width="8" height="8" viewBox="0 0 8 8"><path d="M.9 4.4L2.8 6.6L6.8 1" stroke="#fff" stroke-width="1" fill="none"/></svg>
 <div class="it" style="top:5.6px;color:#fff;font-weight:bold;letter-spacing:-.25px">Name</div>
 <div class="it" style="top:19.8px">Size</div>
 <div class="it" style="top:35px">Count</div>
 <div class="it" style="top:49px">Type</div>
</div>
</div>
</body></html>
